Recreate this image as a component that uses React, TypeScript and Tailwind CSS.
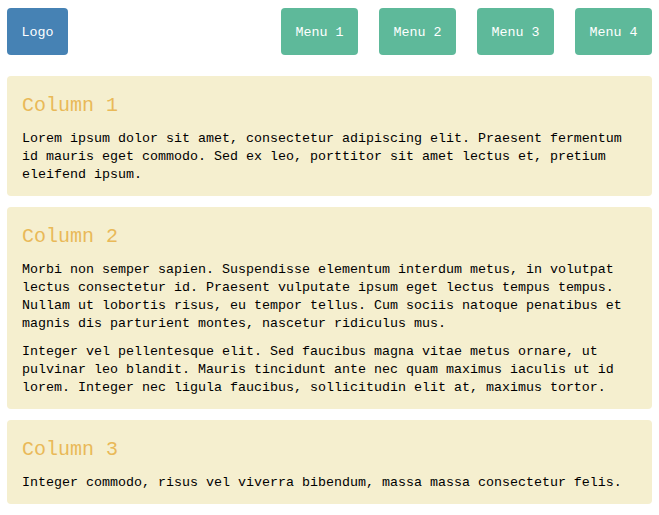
const menus = ["Menu 1", "Menu 2", "Menu 3", "Menu 4"];

const columns = [
  {
    title: "Column 1",
    paragraphs: [
      "Lorem ipsum dolor sit amet, consectetur adipiscing elit. Praesent fermentum id mauris eget commodo. Sed ex leo, porttitor sit amet lectus et, pretium eleifend ipsum.",
    ],
  },
  {
    title: "Column 2",
    paragraphs: [
      "Morbi non semper sapien. Suspendisse elementum interdum metus, in volutpat lectus consectetur id. Praesent vulputate ipsum eget lectus tempus tempus. Nullam ut lobortis risus, eu tempor tellus. Cum sociis natoque penatibus et magnis dis parturient montes, nascetur ridiculus mus.",
      "Integer vel pellentesque elit. Sed faucibus magna vitae metus ornare, ut pulvinar leo blandit. Mauris tincidunt ante nec quam maximus iaculis ut id lorem. Integer nec ligula faucibus, sollicitudin elit at, maximus tortor.",
    ],
  },
  {
    title: "Column 3",
    paragraphs: [
      "Integer commodo, risus vel viverra bibendum, massa massa consectetur felis.",
    ],
  },
];

const App = () => {
  return (
    <div className="bg-white w-[659px] min-h-[515px] px-[7px] pt-[8px] font-['Liberation_Mono',monospace]">
      <header className="flex justify-between items-start">
        <div className="w-[61px] h-[47px] pt-[3px] rounded-[4px] bg-[#4682b4] text-white text-[13.33px] flex items-center justify-center">
          Logo
        </div>
        <nav className="flex gap-[21px]">
          {menus.map((m) => (
            <div
              key={m}
              className="w-[77px] h-[47px] pt-[3px] rounded-[4px] bg-[#5eb99a] text-white text-[13.33px] flex items-center justify-center"
            >
              {m}
            </div>
          ))}
        </nav>
      </header>
      <main className="mt-[21px] flex flex-col gap-[11px]">
        {columns.map((c) => (
          <section
            key={c.title}
            className="bg-[#f5efcf] rounded-[4px] px-[15px] pt-[16px] pb-[12px]"
          >
            <h2 className="text-[20px] leading-[28px] text-[#e9b958]">{c.title}</h2>
            <div className="mt-[10px] flex flex-col gap-[10px]">
              {c.paragraphs.map((p, i) => (
                <p key={i} className="text-[13.33px] leading-[18px] text-black">
                  {p}
                </p>
              ))}
            </div>
          </section>
        ))}
      </main>
    </div>
  );
};

export default App;
